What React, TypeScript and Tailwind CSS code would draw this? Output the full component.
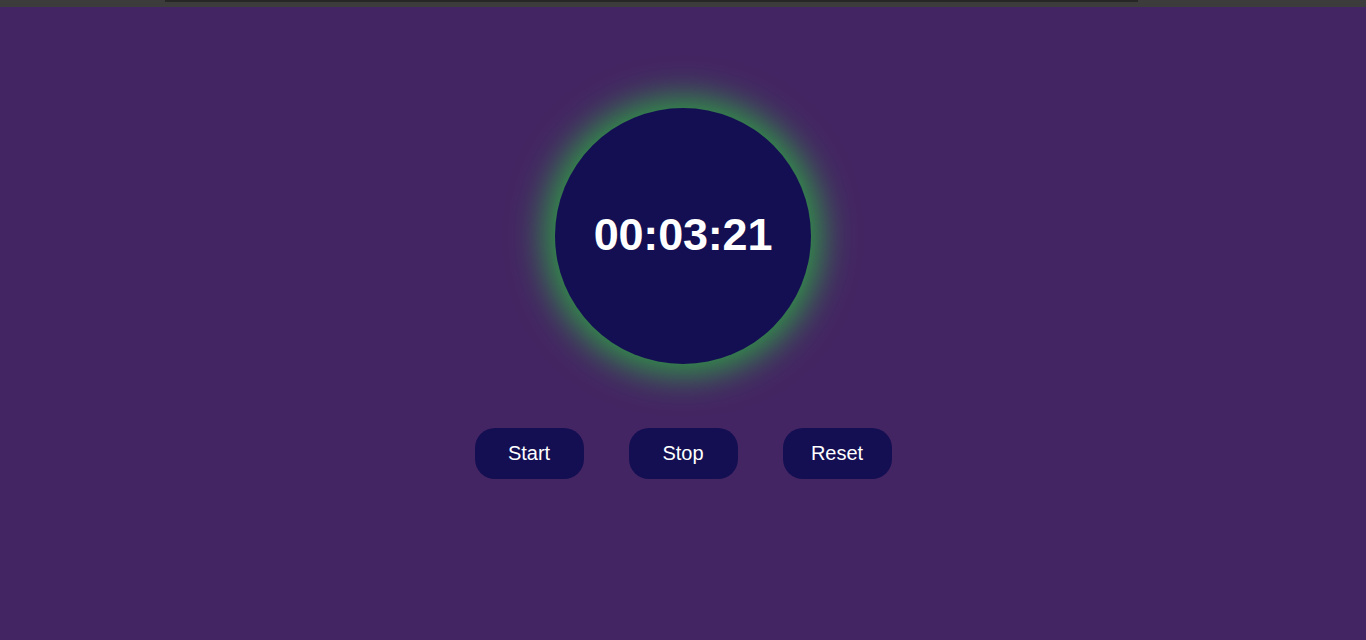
export default function App() {
  return (
    <div
      className="w-full h-[640px] bg-[#442563] flex flex-col overflow-hidden"
      style={{ fontFamily: '"Liberation Sans", Arial, sans-serif' }}
    >
      <div className="h-[7px] bg-[#3c3c3c] shrink-0 flex justify-center">
        <div className="w-[973px] ml-[-63px] h-[2px] bg-[#262626]" />
      </div>
      <div className="flex flex-col items-center">
        <div className="mt-[101px] w-[256px] h-[256px] pb-[3px] rounded-full bg-[#130f52] shadow-[0_0_36px_10px_#2f9e45] flex items-center justify-center">
          <span className="text-white font-bold text-[45px] leading-none tracking-[-0.2px]">00:03:21</span>
        </div>
        <div className="mt-[64px] flex gap-[45px]">
          {["Start", "Stop", "Reset"].map((l) => (
            <button
              key={l}
              className="w-[109px] h-[51px] pb-[2px] rounded-[20px] bg-[#130f52] text-white text-[20px] flex items-center justify-center"
            >
              {l}
            </button>
          ))}
        </div>
      </div>
    </div>
  );
}
